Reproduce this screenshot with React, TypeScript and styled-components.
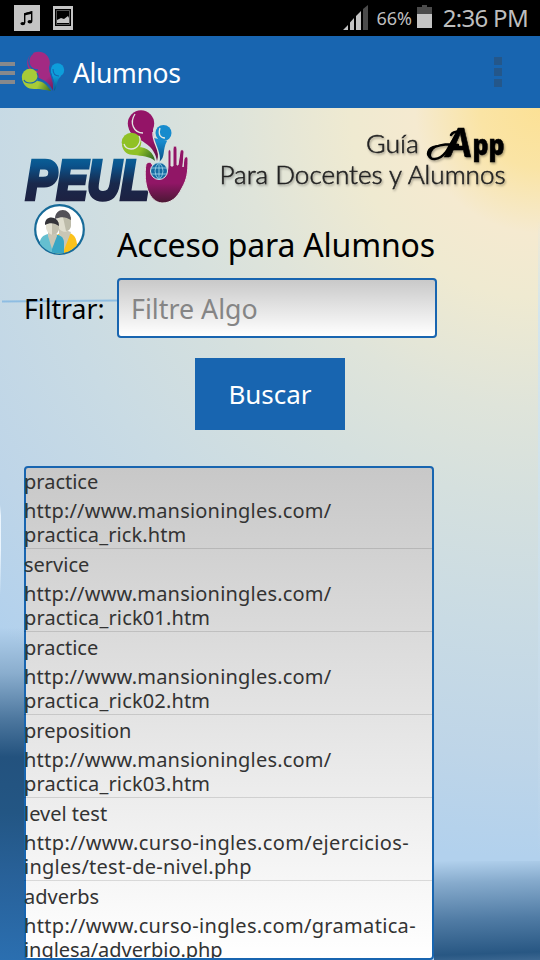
import React from "react";
import styled, { createGlobalStyle } from "styled-components";

const BLUE = "#1865b0";

const GlobalStyle = createGlobalStyle`
  * { box-sizing: border-box; }
  html, body { margin: 0; padding: 0; background: #000; overflow: hidden; }
  body { font-family: "Noto Sans", "Open Sans", sans-serif; }
`;

const Screen = styled.div`
  width: 540px;
  height: 960px;
  display: flex;
  flex-direction: column;
  overflow: hidden;
`;

const StatusBar = styled.div`
  height: 36px;
  flex: none;
  display: flex;
  align-items: center;
  justify-content: space-between;
  background: #000;
  padding: 0 12px 0 14px;
`;

const StatusGroup = styled.div`
  display: flex;
  align-items: center;
  height: 36px;
`;

const StatusText = styled.span<{ $size: number; $gap: number; $spacing: number }>`
  color: #bebebe;
  font-size: ${(p) => p.$size}px;
  line-height: 36px;
  margin-left: ${(p) => p.$gap}px;
  letter-spacing: ${(p) => p.$spacing}px;
  white-space: nowrap;
`;

const ActionBar = styled.header`
  height: 72px;
  flex: none;
  display: flex;
  align-items: center;
  background: ${BLUE};
  padding-right: 38px;
`;

const Drawer = styled.div`
  width: 15px;
  height: 22px;
  display: flex;
  flex-direction: column;
  justify-content: space-between;
  margin-top: 1px;
`;

const DrawerLine = styled.i`
  height: 4px;
  background: #87898c;
`;

const AppIcon = styled.svg`
  margin: 0 0 0 6px;
  flex: none;
`;

const BarTitle = styled.h1`
  flex: 1;
  margin: 0 0 0 8px;
  color: #fff;
  font-size: 26.5px;
  font-weight: 400;
  line-height: 72px;
  padding-top: 1px;
  letter-spacing: -0.35px;
`;

const Overflow = styled.div`
  width: 8px;
  display: grid;
  gap: 3px;
`;

const OverflowDot = styled.i`
  height: 8px;
  background: #24578a;
`;

const Content = styled.main`
  flex: 1;
  min-height: 0;
  display: flex;
  flex-direction: column;
  background:
    linear-gradient(180deg, rgba(205, 228, 245, 0), rgba(205, 228, 245, 0.8) 15%, rgba(205, 224, 240, 0.3) 80%, rgba(205, 224, 240, 0)) 538px 110px / 2px 640px no-repeat,
    linear-gradient(180deg, rgba(255,255,255,0), rgba(240,248,255,.9) 12%, rgba(240,248,255,.9) 50%, rgba(255,255,255,0)) 0 397px / 1px 90px no-repeat,
    linear-gradient(178deg, rgba(43, 96, 146, 0) 0%, rgba(43, 91, 137, 0.32) 22%, rgba(43, 91, 137, 0.72) 58%, #285783 92%, #3d6892 100%) 434px 753px / 106px 99px no-repeat,
    linear-gradient(180deg, rgba(35, 82, 126, 0) 5%, rgba(35, 82, 126, 0.28) 18%, rgba(35, 82, 126, 0.7) 31%, #23527e 42%, #235684 58%, #286199 76%, #2b6fb0 100%) 0 502px / 30px 350px no-repeat,
    radial-gradient(circle at 540px 0, #fce196 0, #fae4a5 60px, #f5ead0 125px, #efead1 190px, #dfe4da 300px, #d5e0de 390px, #c9dbe4 520px, #bed5e8 650px, #b2d1ed 750px);
`;

const Banner = styled.div`
  height: 97px;
  display: flex;
  flex: none;
`;

const TitleRow = styled.div`
  height: 73px;
  flex: none;
  margin-top: -1px;
  padding-left: 33px;
  display: flex;
  align-items: flex-start;
`;

const PageTitle = styled.h2`
  margin: 20px 0 0 32px;
  font-size: 32px;
  font-weight: 400;
  line-height: 42px;
  letter-spacing: -0.2px;
  color: #000;
  white-space: nowrap;
`;

const FilterRow = styled.div`
  height: 60px;
  margin-top: 1px;
  flex: none;
  display: flex;
  align-items: center;
  background: linear-gradient(179.5deg, rgba(119,177,225,0) 22px, rgba(119,177,225,.7) 23px, rgba(119,177,225,.7) 24px, rgba(119,177,225,0) 25px) 2px 0 / 117px 60px no-repeat;
`;

const FilterLabel = styled.label`
  width: 93px;
  margin-left: 24px;
  padding-top: 2px;
  font-size: 26.6px;
  line-height: 60px;
  color: #000;
  white-space: nowrap;
`;

const FilterInput = styled.input`
  width: 320px;
  height: 60px;
  padding: 1px 12px 0;
  border: 2px solid ${BLUE};
  border-radius: 4px;
  background: linear-gradient(#c9c9c9, #fff);
  font: 400 26.8px "Noto Sans", sans-serif;
  outline: none;
  &::placeholder { color: #858585; opacity: 1; }
`;

const SearchButton = styled.button`
  width: 150px;
  height: 72px;
  flex: none;
  margin: 20px 0 0 195px;
  padding: 0 0 1px;
  border: 0;
  background: ${BLUE};
  color: #fff;
  font: 400 26px "Noto Sans", sans-serif;
`;

const ListBox = styled.div`
  width: 410px;
  height: 494px;
  flex: none;
  margin: 36px 0 0 24px;
  border: 2px solid ${BLUE};
  border-radius: 4px;
  background: linear-gradient(#c8c8c8, #fff);
`;

const Rows = styled.ul`
  list-style: none;
  margin: -2px 0 0 -2px;
  padding: 0;
  width: 408px;
  height: 492px;
  overflow: hidden;
`;

const Row = styled.li`
  height: 83px;
  border-bottom: 1px solid rgba(0, 0, 0, 0.12);
  color: #333;
  font-size: 20px;
`;

const RowTitle = styled.div`
  height: 33px;
  line-height: 31px;
`;

const RowLink = styled.div<{ $spacing: number }>`
  line-height: 24px;
  letter-spacing: ${(p) => p.$spacing}px;
  white-space: nowrap;
`;

const ENTRIES: { title: string; link: [string, number][] }[] = [
  { title: "practice", link: [["http://www.mansioningles.com/", 0.2], ["practica_rick.htm", 0.12]] },
  { title: "service", link: [["http://www.mansioningles.com/", 0.2], ["practica_rick01.htm", 0.15]] },
  { title: "practice", link: [["http://www.mansioningles.com/", 0.2], ["practica_rick02.htm", 0.15]] },
  { title: "preposition", link: [["http://www.mansioningles.com/", 0.2], ["practica_rick03.htm", 0.15]] },
  { title: "level test", link: [["http://www.curso-ingles.com/ejercicios-", 0.34], ["ingles/test-de-nivel.php", 0.26]] },
  { title: "adverbs", link: [["http://www.curso-ingles.com/gramatica-", 0.33], ["inglesa/adverbio.php", -0.05]] },
];

const StatusIcons = () => (
  <svg width="60" height="36" viewBox="14 0 60 36">
    <path d="M14 5h26v26H14z" fill="#c4c4c4" />
    <path d="M24.7 23v-9.3l7-1.8v9.4" fill="none" stroke="#000" strokeWidth="1.4" />
    <path d="M24.5 13.2l7.5-1.9v2.4l-7.5 1.9z" />
    <ellipse cx="22.8" cy="23.6" rx="2.4" ry="1.7" />
    <ellipse cx="29.9" cy="21.8" rx="2.4" ry="1.7" />
    <path d="M53 6h20v24H53z" fill="#c4c4c4" />
    <path d="M55 9h16v17H55z" />
    <path d="M56.5 10.5h13v14h-13z" fill="none" stroke="#777" strokeWidth=".7" />
    <path d="M57 23v-3l4-2 3 1 4-3 1 2v5z" fill="#c4c4c4" />
  </svg>
);

const Signal = () => (
  <svg width="26" height="36" viewBox="342 0 26 36">
    <path d="M342 30l5-5v5zM349 30v-7.500l4-4.500v12zM355 30V16l5-5v19z" fill="#c4c4c4" />
    <path d="M362 30V9l5-4v25z" fill="#4b4b4b" />
  </svg>
);

const BatteryIcon = styled.svg`
  margin-left: 5px;
`;

const Battery = () => (
  <BatteryIcon width="15" height="36" viewBox="417 0 15 36">
    <path d="M417 7h5V5h5v2h5v7h-15z" fill="#4b4b4b" />
    <path d="M417 14h15v14h-15z" fill="#c4c4c4" />
  </BatteryIcon>
);

const Logo = () => (
  <AppIcon width="44" height="42" viewBox="21 51 44 42">
    <defs>
      <linearGradient id="im" x1="33" y1="65" x2="56" y2="91" gradientUnits="userSpaceOnUse">
        <stop offset=".55" stopColor="#a32a83" /><stop offset="1" stopColor="#641950" />
      </linearGradient>
      <linearGradient id="ig" x1="22" y1="78" x2="51" y2="90" gradientUnits="userSpaceOnUse">
        <stop offset=".55" stopColor="#a7cb38" /><stop offset="1" stopColor="#3d711f" />
      </linearGradient>
      <linearGradient id="ib" x1="0" y1="63" x2="0" y2="91" gradientUnits="userSpaceOnUse">
        <stop offset=".45" stopColor="#0d9edb" /><stop offset="1" stopColor="#075986" />
      </linearGradient>
    </defs>
    <path d="M51 69c0 5 2 9 3 12 1 4 0 7 0 10 4-4 1-9 7-15z" fill="url(#ib)" />
    <circle cx="57.500" cy="70" r="6.700" fill="url(#ib)" />
    <path d="M29 70c1 6 4 6 10 8 8 3 12 8 14 13 3-8-4-16-4-24z" fill="url(#im)" />
    <circle cx="38.500" cy="63" r="11.300" fill="url(#im)" />
    <path d="M33 53c-7 6-5 17 5 17" fill="none" stroke={BLUE} strokeWidth="1.300" />
    <path d="M22 78c1 8 6 11 12 11 6 0 13 1 17 2-4-6-8-10-14-10z" fill="url(#ig)" />
    <circle cx="30" cy="77" r="8.200" fill="url(#ig)" />
    <path d="M37 73c3 5-1 10-7 10-3 0-5-1-6-3" fill="none" stroke={BLUE} strokeWidth="1.200" />
    <path d="M53 69c0 5 3 7 6 7M50 68c-1 8 6 12 3 23" fill="none" stroke={BLUE} strokeWidth="1.100" />
  </AppIcon>
);

const BannerArt = () => (
  <svg width="540" height="97" viewBox="0 108 540 97">
    <defs>
      <linearGradient id="peul" x1="0" y1="157" x2="0" y2="201" gradientUnits="userSpaceOnUse">
        <stop stopColor="#096299" /><stop offset=".2" stopColor="#0b528b" /><stop offset=".6" stopColor="#19294c" /><stop offset="1" stopColor="#1d2142" />
      </linearGradient>
      <linearGradient id="hand" x1="0" y1="148" x2="0" y2="202" gradientUnits="userSpaceOnUse">
        <stop offset=".65" stopColor="#911666" /><stop offset="1" stopColor="#4d1836" />
      </linearGradient>
      <linearGradient id="bm" x1="135" y1="115" x2="158" y2="162" gradientUnits="userSpaceOnUse">
        <stop offset=".6" stopColor="#941467" /><stop offset="1" stopColor="#541139" />
      </linearGradient>
      <linearGradient id="bg" x1="125" y1="140" x2="155" y2="160" gradientUnits="userSpaceOnUse">
        <stop offset=".5" stopColor="#90c126" /><stop offset="1" stopColor="#286325" />
      </linearGradient>
      <linearGradient id="bb" x1="0" y1="125" x2="0" y2="162" gradientUnits="userSpaceOnUse">
        <stop offset=".45" stopColor="#178bcd" /><stop offset="1" stopColor="#084c82" />
      </linearGradient>
      <filter id="shade" x="-10%" y="-20%" width="120%" height="150%">
        <feDropShadow dx="1" dy="1.500" stdDeviation=".8" floodColor="#000" floodOpacity=".35" />
      </filter>
    </defs>
    <text x="26" y="198.500" textLength="123" lengthAdjust="spacingAndGlyphs" fontFamily="Liberation Sans" fontWeight="700" fontStyle="italic" fontSize="56" fill="url(#peul)" stroke="url(#peul)" strokeWidth="4.500">PEUL</text>
    <path d="M146 164c3-3 6-2 7 3 3 13 15 13 15-1v-14c0-3 3-3 3 0v14h2v-17c0-4 4-4 4 0v16h1l2-13c0-3 4-3 4 0l-1 15 1-8c1-3 4-3 4 0 0 14-1 20-6 29-5 10-11 15-20 15-13-1-19-19-16-39z" fill="url(#hand)" stroke="#e0e3df" strokeWidth="1" />
    <path d="M154 138c1 9 7 15 5 24 7-5 3-12 8-21z" fill="url(#bb)" />
    <circle cx="163.500" cy="133" r="8" fill="url(#bb)" />
    <path d="M129 129c3 9 10 9 16 14 8 5 11 12 12 18 4-11-5-22-4-33z" fill="url(#bm)" />
    <circle cx="141" cy="123.500" r="13.200" fill="url(#bm)" />
    <path d="M122 145c1 7 6 10 12 10 8 1 15 1 21 6-1-8-8-14-17-14z" fill="url(#bg)" />
    <circle cx="131.500" cy="142.500" r="9.800" fill="url(#bg)" />
    <path d="M135 114c-6 9-1 19 8 19M139 136c3 5-1 13-8 13-3 0-6-2-7-5M160 128c-2 6 0 10 5 10M153 132c-1 11 8 18 6 30" fill="none" stroke="#e2e7e2" strokeWidth="1.300" />
    <circle cx="159" cy="171" r="8.500" fill="#146ba3" stroke="#dce5e6" strokeWidth="1" />
    <path d="M151 168h16M151 174h16M159 162v18M159 162q-8 9 0 18M159 162q8 9 0 18" fill="none" stroke="#a4d8ed" strokeWidth=".8" />
    <g fill="#222" filter="url(#shade)">
      <text x="366" y="153" textLength="53" lengthAdjust="spacingAndGlyphs" fontFamily="Lato" fontWeight="300" fontSize="25.500" stroke="#222" strokeWidth=".5">Guía</text>
      <text x="219.500" y="184" textLength="286" lengthAdjust="spacingAndGlyphs" fontFamily="Lato" fontWeight="300" fontSize="25" stroke="#222" strokeWidth=".5">Para Docentes y Alumnos</text>
      <path d="M458 145c-9-2-29 0-29 9 0 7 10 7 17-2 5-7 8-16 13-20-4-1-7 1-8 3" fill="none" stroke="#000" strokeWidth="2.500" strokeLinecap="round" />
      <path d="M436 146c-9 1-11 10-5 12-2-4 0-8 5-12z" fill="#000" stroke="#000" strokeWidth="1.500" />
      <text x="446" y="157" textLength="26" lengthAdjust="spacingAndGlyphs" fontFamily="Lato" fontStyle="italic" fontWeight="900" fontSize="39" fill="#000" stroke="#000" strokeWidth=".6">A</text>
      <text x="472.500" y="154.500" textLength="32" lengthAdjust="spacingAndGlyphs" fontFamily="Open Sans" fontWeight="800" fontSize="28" fill="#000" stroke="#000" strokeWidth=".5">pp</text>
    </g>
  </svg>
);

const Students = () => (
  <svg width="52" height="52" viewBox="33 203 52 52">
    <defs><clipPath id="disc"><circle cx="59" cy="229" r="23.500" /></clipPath></defs>
    <circle cx="59.500" cy="228.500" r="24.300" fill="#fff" stroke="#176b99" strokeWidth="2.200" />
    <g clipPath="url(#disc)">
      <path d="M53 255v-14c2-8 7-9 11-10 8 1 12 3 13 12v12z" fill="#fbc21c" />
      <path d="M59 226v8l5 15 7-18-3-1v-5z" fill="#c9c6b5" />
      <path d="M57 216h14v8c-1 9-11 9-14 0z" fill="#dfddce" />
      <path d="M63 216h8v8c0 3-2 6-5 6z" fill="#bdbba9" />
      <path d="M55 218c0-12 16-12 16 1-5-3-9-4-16-1z" fill="#535158" />
      <path d="M40 255v-15c2-7 8-7 12-7 8 1 12 2 12 10v12z" fill="#65bfd0" />
      <path d="M52 233c9 1 12 3 12 10v12H52z" fill="#38a6c5" />
      <path d="M48 230v5l4 13 5-13-1-5z" fill="#c9c6b5" />
      <path d="M46 221h13v6c-1 9-11 9-13 0z" fill="#e3e0d1" />
      <path d="M52 221h7v6c0 4-3 7-7 7z" fill="#c2bfae" />
      <path d="M45 224c-1-10 14-10 14 1-4-3-9-4-14-1z" fill="#35343a" />
    </g>
  </svg>
);

export default function App() {
  return (
    <>
      <GlobalStyle />
      <Screen>
        <StatusBar>
          <StatusIcons />
          <StatusGroup>
            <Signal />
            <StatusText $size={18} $gap={8} $spacing={-0.1}>66%</StatusText>
            <Battery />
            <StatusText $size={24} $gap={11} $spacing={-0.7}>2:36 PM</StatusText>
          </StatusGroup>
        </StatusBar>
        <ActionBar>
          <Drawer><DrawerLine /><DrawerLine /><DrawerLine /></Drawer>
          <Logo />
          <BarTitle>Alumnos</BarTitle>
          <Overflow><OverflowDot /><OverflowDot /><OverflowDot /></Overflow>
        </ActionBar>
        <Content>
          <Banner><BannerArt /></Banner>
          <TitleRow>
            <Students />
            <PageTitle>Acceso para Alumnos</PageTitle>
          </TitleRow>
          <FilterRow>
            <FilterLabel htmlFor="filter">Filtrar:</FilterLabel>
            <FilterInput id="filter" placeholder="Filtre Algo" />
          </FilterRow>
          <SearchButton>Buscar</SearchButton>
          <ListBox>
            <Rows>
              {ENTRIES.map((entry, i) => (
                <Row key={i}>
                  <RowTitle>{entry.title}</RowTitle>
                  {entry.link.map(([line, spacing]) => (
                    <RowLink key={line} $spacing={spacing}>{line}</RowLink>
                  ))}
                </Row>
              ))}
            </Rows>
          </ListBox>
        </Content>
      </Screen>
    </>
  );
}
